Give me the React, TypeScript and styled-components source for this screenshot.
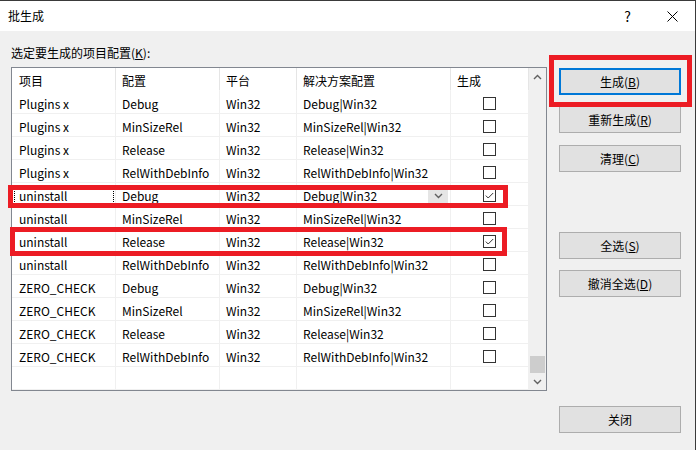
import React from "react";
import styled, { createGlobalStyle } from "styled-components";

const GlobalStyle = createGlobalStyle`
  html, body {
    margin: 0;
    padding: 0;
    background: #f0f0f0;
  }
  body {
    font-family: "Microsoft YaHei UI", "Noto Sans CJK SC", sans-serif;
    font-size: 12px;
    color: #000;
  }
`;

const Window = styled.div`
  position: relative;
  width: 696px;
  height: 450px;
  box-sizing: border-box;
  border-top: 1px solid #3a3a3a;
  border-right: 1px solid #3a3a3a;
  background: #f0f0f0;
  display: flex;
  flex-direction: column;
  overflow: hidden;
`;

const TitleBar = styled.div`
  height: 30px;
  flex: none;
  background: #fff;
  display: flex;
  align-items: center;
  padding-left: 8px;
`;

const Title = styled.span`
  flex: 1;
  line-height: 16px;
`;

const TitleButton = styled.div`
  width: 45px;
  height: 30px;
  display: flex;
  align-items: center;
  justify-content: center;
  font-size: 14px;
  color: #000;
`;

const Body = styled.div`
  flex: 1;
  display: flex;
  padding: 0 14px 0 11px;
`;

const LeftColumn = styled.div`
  width: 536px;
  display: flex;
  flex-direction: column;
`;

const Label = styled.div`
  margin-top: 14px;
  line-height: 16px;
  height: 16px;
`;

const ListBox = styled.div`
  margin-top: 6px;
  width: 536px;
  height: 324px;
  box-sizing: border-box;
  border: 1px solid #828790;
  background: #fff;
  display: flex;
`;

const Grid = styled.div`
  width: 517px;
  display: grid;
  grid-template-columns: 104px 104px 77px 154px 78px;
  grid-auto-rows: 23px;
  align-content: start;
`;

const Cell = styled.div<{ $header?: boolean; $first?: boolean; $center?: boolean; $focus?: boolean }>`
  box-sizing: border-box;
  display: flex;
  align-items: center;
  justify-content: ${({ $center }) => ($center ? "center" : "space-between")};
  padding-top: ${({ $center }) => ($center ? "2px" : "3px")};
  padding-left: ${({ $first, $center }) => ($center ? "0" : $first ? "7px" : "6px")};
  border-right: 1px solid ${({ $header }) => ($header ? "#e5e5e5" : "#f0f0f0")};
  border-bottom: 1px solid ${({ $header }) => ($header ? "transparent" : "#f0f0f0")};
  white-space: nowrap;
  line-height: 16px;
  outline: ${({ $focus }) => ($focus ? "1px dotted #000" : "none")};
  outline-offset: -3px;
`;

const ComboButton = styled.div`
  width: 20px;
  height: 16px;
  margin-right: 2px;
  background: #e5e5e5;
  display: flex;
  align-items: center;
  justify-content: center;
`;

const Scrollbar = styled.div`
  width: 17px;
  background: #f0f0f0;
  display: flex;
  flex-direction: column;
`;

const ScrollArrow = styled.div`
  height: 17px;
  display: flex;
  align-items: center;
  justify-content: center;
`;

const ScrollTrack = styled.div`
  flex: 1;
  display: flex;
  flex-direction: column;
  justify-content: flex-end;
`;

const ScrollThumb = styled.div`
  height: 17px;
  margin: 0 1px;
  background: #cdcdcd;
`;

const RightColumn = styled.div`
  width: 122px;
  margin-left: 12px;
  display: flex;
  flex-direction: column;
  padding-top: 37px;
`;

const Button = styled.div<{ $default?: boolean; $gap?: number }>`
  height: 27px;
  box-sizing: border-box;
  margin-top: ${({ $gap }) => $gap ?? 0}px;
  padding-top: 1px;
  background: #e1e1e1;
  border: ${({ $default }) => ($default ? "2px solid #0078d7" : "1px solid #adadad")};
  display: flex;
  align-items: center;
  justify-content: center;
  line-height: 16px;
`;

const Highlight = styled.div<{ $x: number; $y: number; $w: number; $h: number }>`
  position: absolute;
  left: ${({ $x }) => $x}px;
  top: ${({ $y }) => $y - 1}px;
  width: ${({ $w }) => $w}px;
  height: ${({ $h }) => $h}px;
  box-sizing: border-box;
  border: 5px solid #ec1c24;
  pointer-events: none;
`;

const Chevron: React.FC<{ up?: boolean }> = ({ up }) => (
  <svg width="9" height="6" viewBox="0 0 9 6">
    <path
      d={up ? "M1 5 L4.5 1.5 L8 5" : "M1 1 L4.5 4.5 L8 1"}
      stroke="#606060"
      strokeWidth="1.4"
      fill="none"
    />
  </svg>
);

const CheckBox: React.FC<{ checked?: boolean }> = ({ checked }) => (
  <svg width="13" height="13" viewBox="0 0 13 13">
    <rect x="0.5" y="0.5" width="12" height="12" fill="#fff" stroke="#333" />
    {checked && <path d="M2.8 6.6 L5.2 9 L10.2 4" stroke="#333" strokeWidth="1" fill="none" />}
  </svg>
);

type Row = {
  project: string;
  config: string;
  checked?: boolean;
  focus?: boolean;
};

const configs = ["Debug", "MinSizeRel", "Release", "RelWithDebInfo"];

const rows: Row[] = [
  ...configs.map((c) => ({ project: "Plugins x", config: c })),
  ...configs.map((c) => ({
    project: "uninstall",
    config: c,
    checked: c === "Debug" || c === "Release",
    focus: c === "Debug",
  })),
  ...configs.map((c) => ({ project: "ZERO_CHECK", config: c })),
];

const headers = ["项目", "配置", "平台", "解决方案配置", "生成"];

const App: React.FC = () => {
  return (
    <>
      <GlobalStyle />
      <Window>
        <TitleBar>
          <Title>批生成</Title>
          <TitleButton>?</TitleButton>
          <TitleButton>
            <svg width="11" height="11" viewBox="0 0 11 11">
              <path d="M0.5 0.5 L10.5 10.5 M10.5 0.5 L0.5 10.5" stroke="#000" strokeWidth="1" />
            </svg>
          </TitleButton>
        </TitleBar>
        <Body>
          <LeftColumn>
            <Label>
              选定要生成的项目配置(<u>K</u>):
            </Label>
            <ListBox>
              <Grid>
                {headers.map((h, i) => (
                  <Cell key={h} $header $first={i === 0}>
                    {h}
                  </Cell>
                ))}
                {rows.map((r, i) => (
                  <React.Fragment key={i}>
                    <Cell $first $focus={r.focus}>
                      {r.project}
                    </Cell>
                    <Cell>{r.config}</Cell>
                    <Cell>Win32</Cell>
                    <Cell>
                      {r.config}|Win32
                      {r.focus && (
                        <ComboButton>
                          <Chevron />
                        </ComboButton>
                      )}
                    </Cell>
                    <Cell $center>
                      <CheckBox checked={r.checked} />
                    </Cell>
                  </React.Fragment>
                ))}
                {headers.map((h) => (
                  <Cell key={"f" + h} />
                ))}
              </Grid>
              <Scrollbar>
                <ScrollArrow>
                  <Chevron up />
                </ScrollArrow>
                <ScrollTrack>
                  <ScrollThumb />
                </ScrollTrack>
                <ScrollArrow>
                  <Chevron />
                </ScrollArrow>
              </Scrollbar>
            </ListBox>
          </LeftColumn>
          <RightColumn>
            <Button $default>
              生成(<u>B</u>)
            </Button>
            <Button $gap={11}>
              重新生成(<u>R</u>)
            </Button>
            <Button $gap={12}>
              清理(<u>C</u>)
            </Button>
            <Button $gap={60}>
              全选(<u>S</u>)
            </Button>
            <Button $gap={11}>
              撤消全选(<u>D</u>)
            </Button>
            <Button $gap={109}>关闭</Button>
          </RightColumn>
        </Body>
        <Highlight $x={8} $y={185} $w={500} $h={23} />
        <Highlight $x={10} $y={227} $w={497} $h={29} />
        <Highlight $x={549} $y={55} $w={143} $h={52} />
      </Window>
    </>
  );
};

export default App;
